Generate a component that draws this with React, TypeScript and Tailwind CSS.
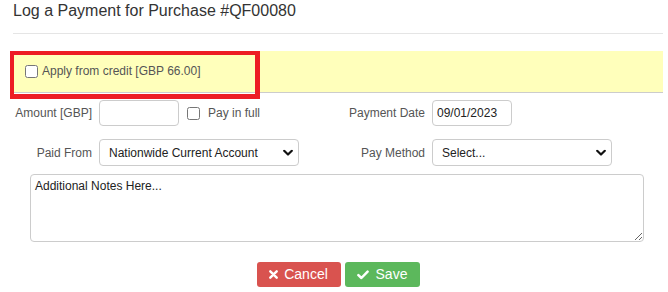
import React from "react";

const Chevron = () => (
  <svg width="10" height="7" viewBox="0 0 10 7" className="pointer-events-none absolute right-[6px] top-1/2 -translate-y-1/2">
    <path d="M1.2 1.3 L5 5 L8.8 1.3" fill="none" stroke="#111" strokeWidth="2.2" strokeLinecap="round" strokeLinejoin="round" />
  </svg>
);

export default function App() {
  const font = { fontFamily: '"Liberation Sans", Arial, sans-serif' };
  return (
    <div className="relative w-[668px] h-[292px] bg-white pl-[13px] pr-[5px] pt-[1px]" style={font}>
      <div className="border-b border-[#e5e5e5] pb-[12px]">
        <h1 className="text-[16px] leading-[20px] text-[#333] font-normal">Log a Payment for Purchase #QF00080</h1>
      </div>

      <div className="relative mt-[17px] h-[42px] bg-[#ffffbb] border-b border-[#cccccc] flex items-center pl-[12px] pb-[1px]">
        <input type="checkbox" className="m-0 w-[13px] h-[13px]" />
        <span className="ml-[4px] text-[12px] text-[#555]">Apply from credit [GBP 66.00]</span>
        <div className="absolute left-[-3px] top-0 w-[250px] h-[48px] border-t-4 border-l-4 border-r-[5px] border-b-[5px] border-[#ed1c24]" />
      </div>

      <div className="mt-[7px] flex items-center h-[26px]">
        <div className="w-[317px] flex items-center">
          <label className="w-[79px] text-right text-[12px] text-[#555]">Amount [GBP]</label>
          <input type="text" className="ml-[7px] w-[80px] h-[26px] border border-[#ccc] rounded-[4px] px-[4px] text-[12px]" />
          <input type="checkbox" className="ml-[8px] m-0 w-[13px] h-[13px]" />
          <span className="ml-[8px] text-[12px] text-[#555]">Pay in full</span>
        </div>
        <label className="w-[95px] text-right text-[12px] text-[#555]">Payment Date</label>
        <input type="text" defaultValue="09/01/2023" className="ml-[7px] w-[80px] h-[26px] border border-[#ccc] rounded-[4px] pl-[4px] text-[12px] text-[#222]" />
      </div>

      <div className="mt-[13px] flex items-center h-[27px]">
        <div className="w-[317px] flex items-center">
          <label className="w-[79px] text-right text-[12px] text-[#555]">Paid From</label>
          <div className="relative ml-[7px] w-[200px] h-[27px]">
            <select defaultValue="n" className="appearance-none w-full h-full border border-[#ccc] rounded-[4px] pl-[9px] text-[12px] text-[#222] bg-white">
              <option value="n">Nationwide Current Account</option>
            </select>
            <Chevron />
          </div>
        </div>
        <label className="w-[95px] text-right text-[12px] text-[#555]">Pay Method</label>
        <div className="relative ml-[7px] w-[180px] h-[27px]">
          <select defaultValue="s" className="appearance-none w-full h-full border border-[#ccc] rounded-[4px] pl-[9px] text-[12px] text-[#222] bg-white">
            <option value="s">Select...</option>
          </select>
          <Chevron />
        </div>
      </div>

      <div className="mt-[8px] pl-[17px] pr-[19px]">
        <textarea
          defaultValue="Additional Notes Here..."
          className="block w-full h-[68px] border border-[#ccc] rounded-[4px] px-[4px] pt-[3px] text-[12px] leading-[16px] text-[#222]"
        />
      </div>

      <div className="mt-[20px] flex justify-center gap-[4px]">
        <button className="w-[84px] h-[25px] rounded-[3px] bg-[#d9534f] text-white text-[14px] flex items-center justify-center gap-[6px]">
          <svg width="9" height="9" viewBox="0 0 9 9">
            <path d="M1.3 1.3 L7.7 7.7 M7.7 1.3 L1.3 7.7" stroke="#fff" strokeWidth="2.4" strokeLinecap="round" />
          </svg>
          <span>Cancel</span>
        </button>
        <button className="w-[75px] h-[25px] rounded-[3px] bg-[#5cb85c] text-white text-[14px] flex items-center justify-center gap-[7px]">
          <svg width="12" height="10" viewBox="0 0 12 10">
            <path d="M1.4 5.2 L4.4 8 L10.6 1.6" fill="none" stroke="#fff" strokeWidth="2.5" strokeLinecap="round" strokeLinejoin="round" />
          </svg>
          <span>Save</span>
        </button>
      </div>
    </div>
  );
}
